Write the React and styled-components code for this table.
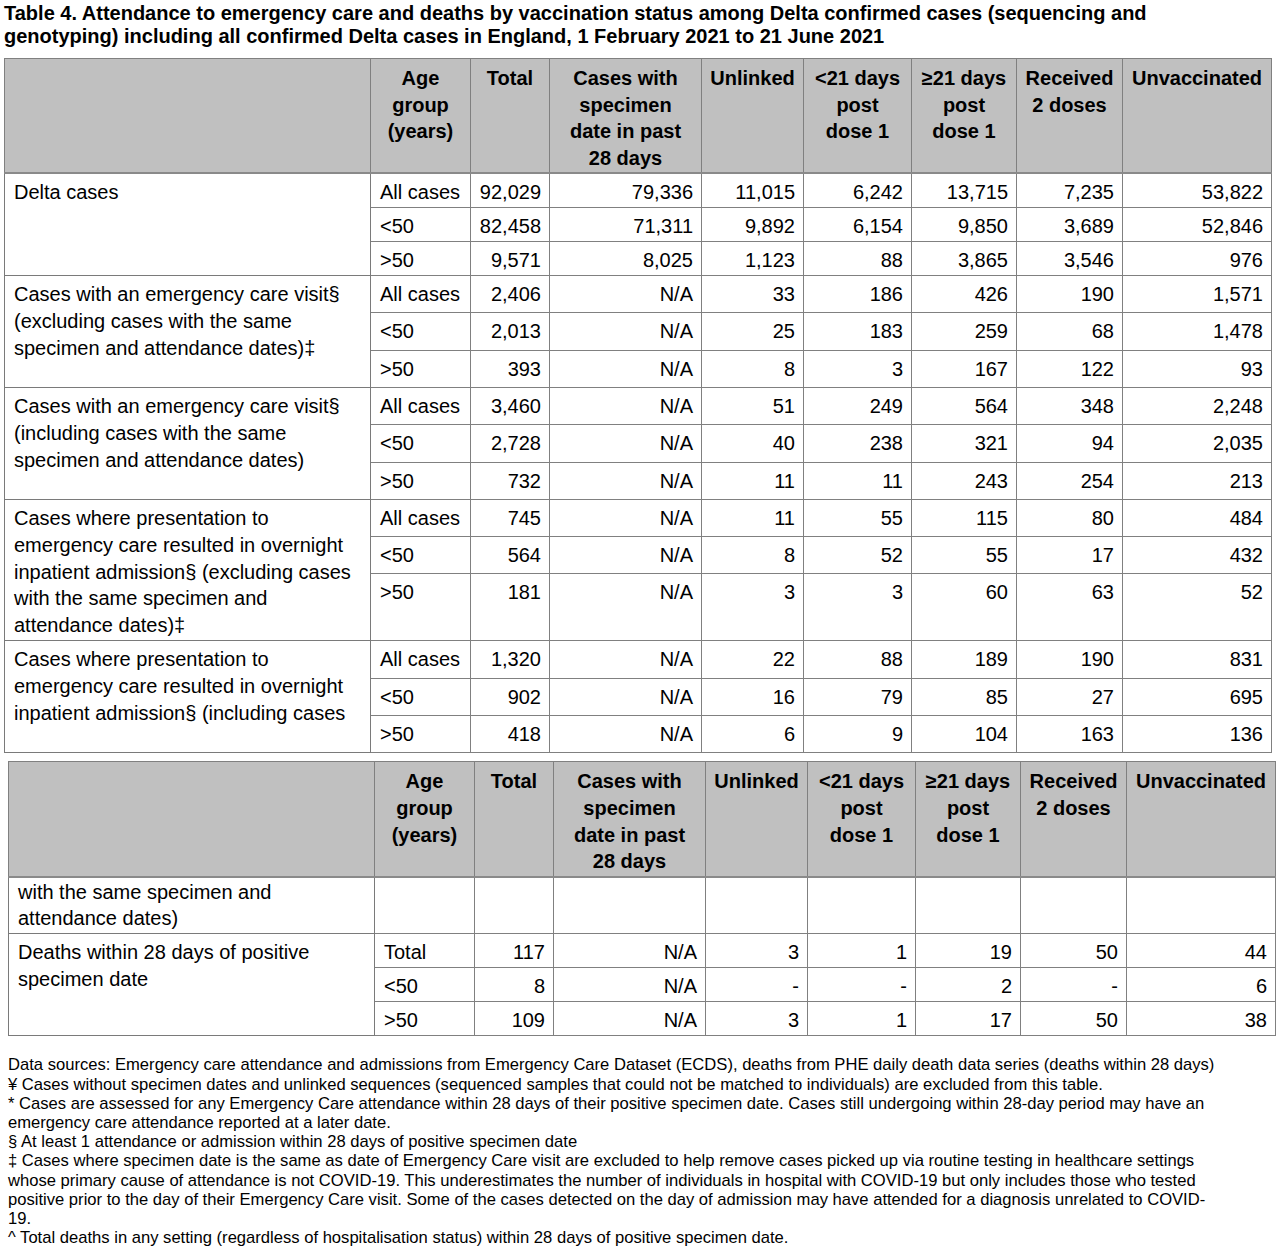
import React from 'react'
import styled, { createGlobalStyle } from 'styled-components'

const GlobalStyle = createGlobalStyle`
  html, body {
    margin: 0;
    padding: 0;
    background: #fff;
  }
  body {
    font-family: "Liberation Sans", Arial, sans-serif;
    color: #000;
  }
`

// column widths, border to border
const COLS = [366, 100, 79, 152, 102, 108, 105, 106, 149]

const HEAD = [
  [],
  ['Age', 'group', '(years)'],
  ['Total'],
  ['Cases with', 'specimen', 'date in past', '28 days'],
  ['Unlinked'],
  ['<21 days', 'post', 'dose 1'],
  ['≥21 days', 'post', 'dose 1'],
  ['Received', '2 doses'],
  ['Unvaccinated'],
]

const SECTIONS = [
  {
    label: 'Delta cases',
    heights: [35, 34, 34],
    rows: [
      ['All cases', '92,029', '79,336', '11,015', '6,242', '13,715', '7,235', '53,822'],
      ['<50', '82,458', '71,311', '9,892', '6,154', '9,850', '3,689', '52,846'],
      ['>50', '9,571', '8,025', '1,123', '88', '3,865', '3,546', '976'],
    ],
  },
  {
    label: 'Cases with an emergency care visit§ (excluding cases with the same specimen and attendance dates)‡',
    heights: [37, 38, 37],
    rows: [
      ['All cases', '2,406', 'N/A', '33', '186', '426', '190', '1,571'],
      ['<50', '2,013', 'N/A', '25', '183', '259', '68', '1,478'],
      ['>50', '393', 'N/A', '8', '3', '167', '122', '93'],
    ],
  },
  {
    label: 'Cases with an emergency care visit§ (including cases with the same specimen and attendance dates)',
    heights: [37, 38, 37],
    rows: [
      ['All cases', '3,460', 'N/A', '51', '249', '564', '348', '2,248'],
      ['<50', '2,728', 'N/A', '40', '238', '321', '94', '2,035'],
      ['>50', '732', 'N/A', '11', '11', '243', '254', '213'],
    ],
  },
  {
    label: 'Cases where presentation to emergency care resulted in overnight inpatient admission§ (excluding cases with the same specimen and attendance dates)‡',
    heights: [37, 37, 67],
    rows: [
      ['All cases', '745', 'N/A', '11', '55', '115', '80', '484'],
      ['<50', '564', 'N/A', '8', '52', '55', '17', '432'],
      ['>50', '181', 'N/A', '3', '3', '60', '63', '52'],
    ],
  },
  {
    label: 'Cases where presentation to emergency care resulted in overnight inpatient admission§ (including cases',
    heights: [38, 37, 37],
    rows: [
      ['All cases', '1,320', 'N/A', '22', '88', '189', '190', '831'],
      ['<50', '902', 'N/A', '16', '79', '85', '27', '695'],
      ['>50', '418', 'N/A', '6', '9', '104', '163', '136'],
    ],
  },
]

const DEATHS = {
  label: 'Deaths within 28 days of positive specimen date',
  heights: [34, 34, 34],
  rows: [
    ['Total', '117', 'N/A', '3', '1', '19', '50', '44'],
    ['<50', '8', 'N/A', '-', '-', '2', '-', '6'],
    ['>50', '109', 'N/A', '3', '1', '17', '50', '38'],
  ],
}

const NOTES = [
  'Data sources: Emergency care attendance and admissions from Emergency Care Dataset (ECDS), deaths from PHE daily death data series (deaths within 28 days)',
  '¥ Cases without specimen dates and unlinked sequences (sequenced samples that could not be matched to individuals) are excluded from this table.',
  '* Cases are assessed for any Emergency Care attendance within 28 days of their positive specimen date. Cases still undergoing within 28-day period may have an',
  'emergency care attendance reported at a later date.',
  '§ At least 1 attendance or admission within 28 days of positive specimen date',
  '‡ Cases where specimen date is the same as date of Emergency Care visit are excluded to help remove cases picked up via routine testing in healthcare settings',
  'whose primary cause of attendance is not COVID-19. This underestimates the number of individuals in hospital with COVID-19 but only includes those who tested',
  'positive prior to the day of their Emergency Care visit. Some of the cases detected on the day of admission may have attended for a diagnosis unrelated to COVID-',
  '19.',
  '^ Total deaths in any setting (regardless of hospitalisation status) within 28 days of positive specimen date.',
]

const Page = styled.div`
  padding-top: 2px;
  width: 1279px;
`

const Title = styled.h1`
  margin: 0 0 10px 4px;
  font-size: 20px;
  font-weight: bold;
  line-height: 23px;
  white-space: nowrap;
`

const Table = styled.table`
  border-collapse: collapse;
  table-layout: fixed;
  width: 1268px;
  margin-left: ${p => p.$indent}px;
  margin-bottom: ${p => p.$gap}px;
  border: 1px solid ${p => p.$edge};
  font-size: 20px;
`

const Row = styled.tr`
  height: ${p => p.$h}px;
`

const HeadCell = styled.th`
  background: #c0c0c0;
  font-weight: bold;
  text-align: center;
  vertical-align: top;
  padding: 6px 2px 0;
  line-height: 26.7px;
  border: 1px solid #808080;
  border-bottom: 2px solid #8a8a8a;
`

const LabelCell = styled.td`
  vertical-align: top;
  padding: ${p => (p.$tight ? 1 : 5)}px 12px 0 9px;
  line-height: 26.6px;
  border: 1px solid #7a7a7a;
`

const AgeCell = styled.td`
  vertical-align: top;
  padding: 5px 4px 0 9px;
  line-height: 27px;
  white-space: nowrap;
  border: 1px solid #808080;
`

const NumCell = styled.td`
  vertical-align: top;
  text-align: right;
  padding: 5px 8px 0 4px;
  line-height: 27px;
  white-space: nowrap;
  border: 1px solid #808080;
`

const Notes = styled.div`
  margin: 19px 0 0 8px;
  font-size: 16.6px;
  line-height: 19.2px;
`

const NoteLine = styled.div`
  white-space: nowrap;
`

function HeaderRow({ h }) {
  return (
    <Row $h={h}>
      {HEAD.map((lines, i) => (
        <HeadCell key={i}>
          {lines.map((l, j) => (
            <React.Fragment key={j}>
              {j > 0 && <br />}
              {l}
            </React.Fragment>
          ))}
        </HeadCell>
      ))}
    </Row>
  )
}

function Section({ label, heights, rows }) {
  return rows.map((cells, r) => (
    <Row key={r} $h={heights[r]}>
      {r === 0 && <LabelCell rowSpan={rows.length}>{label}</LabelCell>}
      <AgeCell>{cells[0]}</AgeCell>
      {cells.slice(1).map((v, i) => (
        <NumCell key={i}>{v}</NumCell>
      ))}
    </Row>
  ))
}

function Cols() {
  return (
    <colgroup>
      {COLS.map((w, i) => (
        <col key={i} style={{ width: w }} />
      ))}
    </colgroup>
  )
}

export default function App() {
  return (
    <Page>
      <GlobalStyle />
      <Title>
        Table 4. Attendance to emergency care and deaths by vaccination status among Delta confirmed cases (sequencing and
        <br />
        genotyping) including all confirmed Delta cases in England, 1 February 2021 to 21 June 2021
      </Title>

      <Table $indent={4} $gap={8} $edge="#3c3c3c">
        <Cols />
        <tbody>
          <HeaderRow h={114} />
          {SECTIONS.map((s, i) => (
            <Section key={i} {...s} />
          ))}
        </tbody>
      </Table>

      <Table $indent={8} $gap={0} $edge="#7a7a7a">
        <Cols />
        <tbody>
          <HeaderRow h={115} />
          <Row $h={57}>
            <LabelCell $tight>with the same specimen and attendance dates)</LabelCell>
            {COLS.slice(1).map((_, i) => (
              <NumCell key={i} />
            ))}
          </Row>
          <Section {...DEATHS} />
        </tbody>
      </Table>

      <Notes>
        {NOTES.map((n, i) => (
          <NoteLine key={i}>{n}</NoteLine>
        ))}
      </Notes>
    </Page>
  )
}
